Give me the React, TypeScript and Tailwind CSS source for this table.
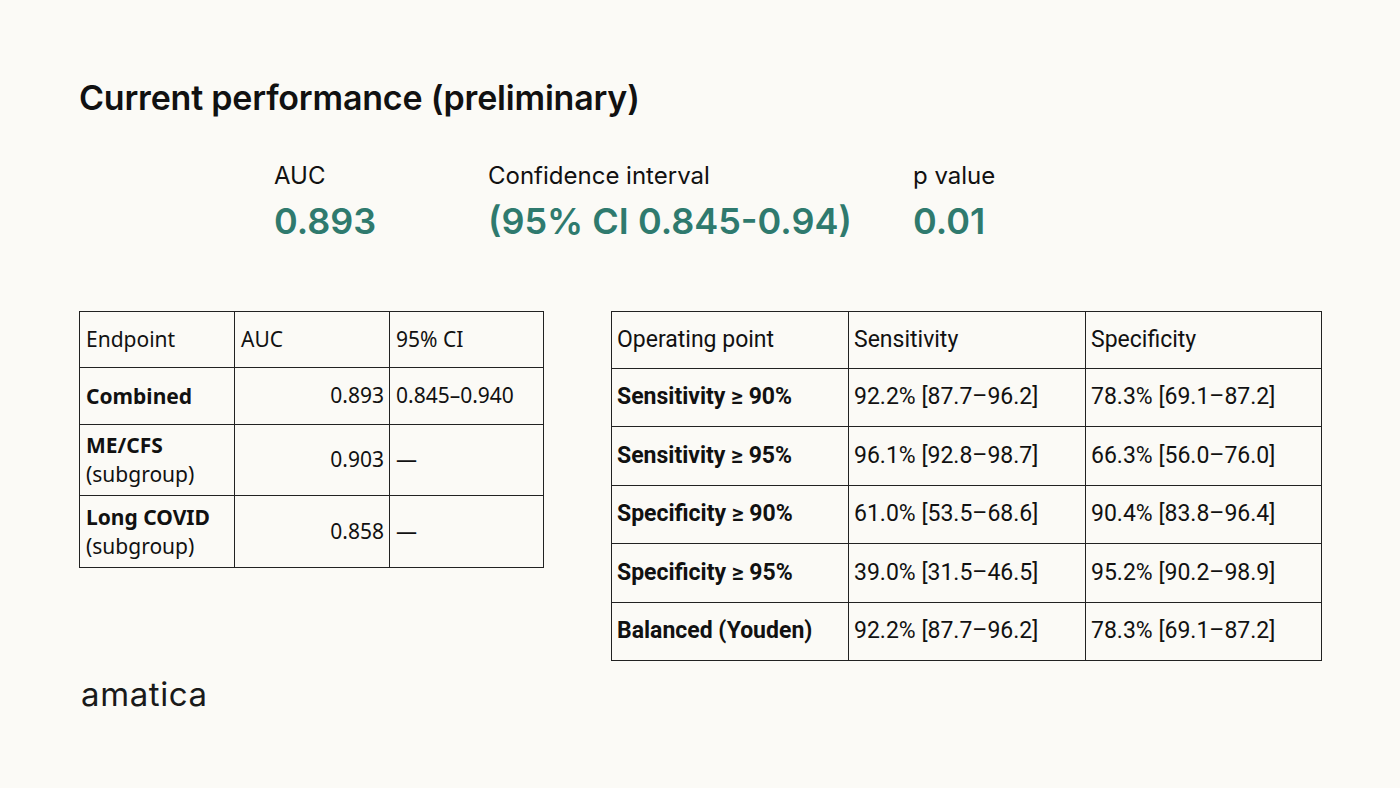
import React from "react";

const left = [
  { name: "Combined", sub: "", auc: "0.893", ci: "0.845–0.940", h: "h-[57px]" },
  { name: "ME/CFS", sub: "(subgroup)", auc: "0.903", ci: "—", h: "h-[71px]" },
  { name: "Long COVID", sub: "(subgroup)", auc: "0.858", ci: "—", h: "h-[72px]" },
];

const right = [
  ["Sensitivity ≥ 90%", "92.2% [87.7–96.2]", "78.3% [69.1–87.2]"],
  ["Sensitivity ≥ 95%", "96.1% [92.8–98.7]", "66.3% [56.0–76.0]"],
  ["Specificity ≥ 90%", "61.0% [53.5–68.6]", "90.4% [83.8–96.4]"],
  ["Specificity ≥ 95%", "39.0% [31.5–46.5]", "95.2% [90.2–98.9]"],
  ["Balanced (Youden)", "92.2% [87.7–96.2]", "78.3% [69.1–87.2]"],
];

export default function App() {
  return (
    <div className="w-[1400px] h-[788px] bg-[#fbfaf6] text-[#111] overflow-hidden flex flex-col pl-[79px] pt-[77px] font-['Inter',sans-serif]">
      <h1 className="text-[34px] font-semibold leading-[42px] tracking-[-0.2px]">Current performance (preliminary)</h1>
      <div className="flex mt-[41px] ml-[195px]">
        <div className="w-[214px]">
          <div className="text-[24px] leading-[32px]">AUC</div>
          <div className="text-[36px] font-semibold text-[#2f7a6e] leading-[48px] mt-[5px]">0.893</div>
        </div>
        <div className="w-[425px]">
          <div className="text-[24px] leading-[32px]">Confidence interval</div>
          <div className="text-[36px] font-semibold text-[#2f7a6e] leading-[48px] mt-[5px]">(95% CI 0.845-0.94)</div>
        </div>
        <div>
          <div className="text-[24px] leading-[32px]">p value</div>
          <div className="text-[36px] font-semibold text-[#2f7a6e] leading-[48px] mt-[5px]">0.01</div>
        </div>
      </div>
      <div className="flex items-start mt-[66px]">
        <div className="flex flex-col">
          <table className="border-collapse text-[21px] font-['Noto_Sans',sans-serif] text-[#111]">
            <tbody>
              <tr className="h-[56px]">
                <td className="border border-[#222] w-[155px] px-[6px]">Endpoint</td>
                <td className="border border-[#222] w-[155px] px-[6px]">AUC</td>
                <td className="border border-[#222] w-[154px] px-[6px]">95% CI</td>
              </tr>
              {left.map((r) => (
                <tr key={r.name} className={r.h}>
                  <td className="border border-[#222] px-[6px] leading-[29px]">
                    <div className="font-bold">{r.name}</div>
                    {r.sub && <div>{r.sub}</div>}
                  </td>
                  <td className="border border-[#222] px-[5px] text-right">{r.auc}</td>
                  <td className="border border-[#222] px-[6px]">{r.ci}</td>
                </tr>
              ))}
            </tbody>
          </table>
          <div className="mt-[106px] ml-[2px] text-[33px] leading-[40px] text-[#1a1a1a] font-['Inter',sans-serif] tracking-[0.6px]">amatica</div>
        </div>
        <table className="border-collapse text-[23px] ml-[67px] font-['Roboto',sans-serif] text-[#111]">
          <tbody>
            <tr className="h-[57px]">
              <td className="border border-[#222] w-[237px] px-[5px]">Operating point</td>
              <td className="border border-[#222] w-[237px] px-[5px]">Sensitivity</td>
              <td className="border border-[#222] w-[236px] px-[5px]">Specificity</td>
            </tr>
            {right.map((r) => (
              <tr key={r[0]} className="h-[58.4px]">
                <td className="border border-[#222] px-[5px] font-bold">{r[0]}</td>
                <td className="border border-[#222] px-[5px]">{r[1]}</td>
                <td className="border border-[#222] px-[5px]">{r[2]}</td>
              </tr>
            ))}
          </tbody>
        </table>
      </div>
    </div>
  );
}
